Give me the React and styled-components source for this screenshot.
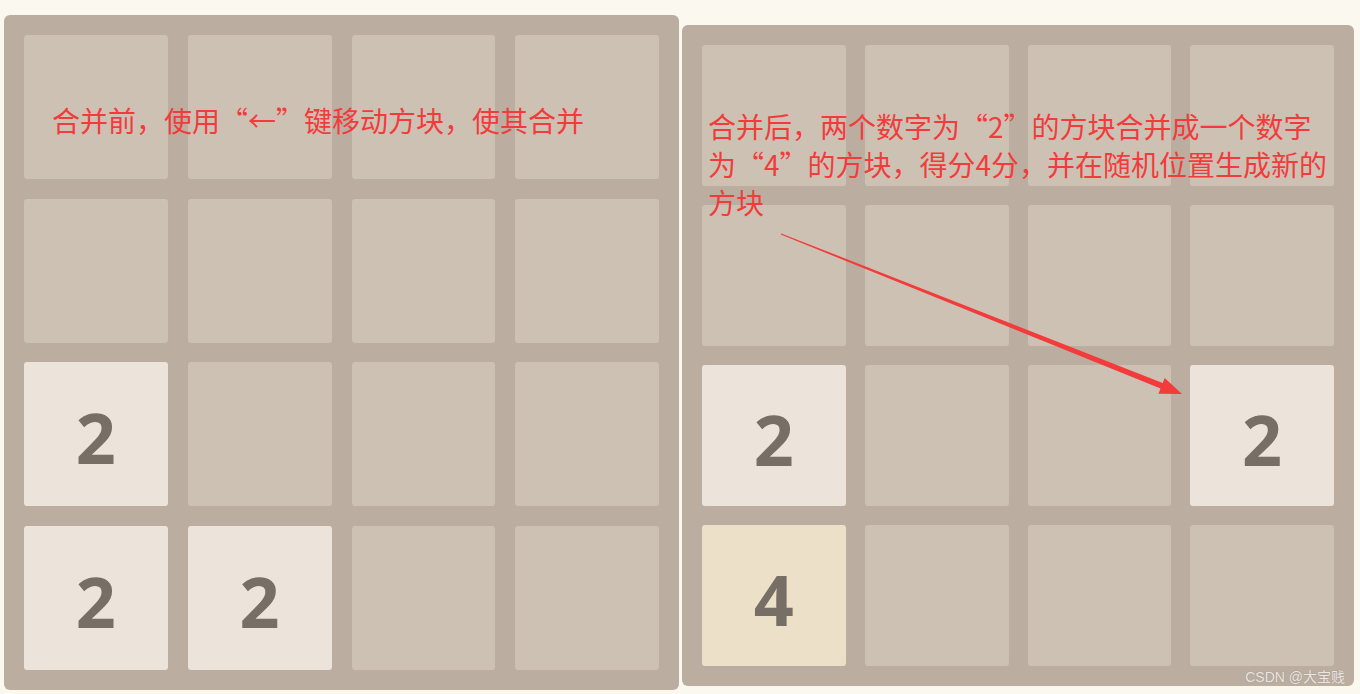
import React from "react";
import styled, { createGlobalStyle } from "styled-components";

const Global = createGlobalStyle`
  html, body { margin: 0; padding: 0; background: #faf8ef; }
  body { width: 1360px; height: 694px; overflow: hidden; font-family: "Open Sans", "Liberation Sans", sans-serif; }
`;

const Page = styled.div`
  display: flex;
  align-items: flex-start;
  gap: 3px;
  padding-left: 4px;
  width: 1360px;
  height: 694px;
  box-sizing: border-box;
`;

const Board = styled.div`
  position: relative;
  box-sizing: border-box;
  margin-top: ${(p) => p.$top}px;
  width: ${(p) => p.$w}px;
  height: ${(p) => p.$h}px;
  padding: 20px;
  background: #bbada0;
  border-radius: 6px;
  display: grid;
  grid-template-columns: repeat(4, 1fr);
  grid-template-rows: repeat(4, 1fr);
  column-gap: ${(p) => p.$cgap}px;
  row-gap: ${(p) => p.$rgap}px;
`;

const tileBg = {
  0: "#cdc1b4",
  2: "#ece4da",
  4: "#ece0c8",
};

const Tile = styled.div`
  border-radius: 3px;
  background: ${(p) => tileBg[p.$value]};
  color: #776e65;
  display: flex;
  align-items: center;
  justify-content: center;
  font-family: "Open Sans", "Liberation Sans", sans-serif;
  font-weight: 700;
  font-size: 70px;
  line-height: 1;
  padding-top: 6px;
  box-sizing: border-box;
`;

const Note = styled.div`
  position: absolute;
  left: ${(p) => p.$x}px;
  top: ${(p) => p.$y}px;
  width: ${(p) => p.$w}px;
  color: #f23c3c;
  font-family: "Noto Sans CJK SC", "Noto Sans", sans-serif;
  font-size: 28px;
  line-height: 38px;
  white-space: ${(p) => (p.$nowrap ? "nowrap" : "normal")};
`;

const ArrowLayer = styled.svg`
  position: absolute;
  left: 0;
  top: 0;
  width: 100%;
  height: 100%;
  pointer-events: none;
  overflow: visible;
`;

const Watermark = styled.div`
  position: absolute;
  right: 9px;
  bottom: 1px;
  font-family: "Liberation Sans", "Noto Sans CJK SC", sans-serif;
  font-size: 14px;
  line-height: 16px;
  color: rgba(245, 242, 238, 0.9);
  text-shadow: 0 0 1px rgba(120, 110, 100, 0.6);
`;

const leftTiles = [
  0, 0, 0, 0,
  0, 0, 0, 0,
  2, 0, 0, 0,
  2, 2, 0, 0,
];

const rightTiles = [
  0, 0, 0, 0,
  0, 0, 0, 0,
  2, 0, 0, 2,
  4, 0, 0, 0,
];

function arrowPoints(x1, y1, x2, y2) {
  const dx = x2 - x1;
  const dy = y2 - y1;
  const len = Math.hypot(dx, dy);
  const ux = dx / len;
  const uy = dy / len;
  const nx = -uy;
  const ny = ux;
  const headLen = 22;
  const headW = 8.5;
  const w0 = 0.6;
  const w1 = 3;
  const bx = x2 - ux * headLen;
  const by = y2 - uy * headLen;
  const pts = [
    [x1 + nx * w0, y1 + ny * w0],
    [bx + nx * w1, by + ny * w1],
    [bx + nx * headW, by + ny * headW],
    [x2, y2],
    [bx - nx * headW, by - ny * headW],
    [bx - nx * w1, by - ny * w1],
    [x1 - nx * w0, y1 - ny * w0],
  ];
  return pts.map((p) => p.map((v) => v.toFixed(1)).join(",")).join(" ");
}

export default function App() {
  return (
    <>
      <Global />
      <Page>
        <Board $top={15} $w={675} $h={675} $cgap={20} $rgap={19.5}>
          {leftTiles.map((v, i) => (
            <Tile key={i} $value={v}>{v ? v : ""}</Tile>
          ))}
          <Note $x={48} $y={86} $nowrap>合并前，使用“←”键移动方块，使其合并</Note>
        </Board>
        <Board $top={25} $w={672} $h={661} $cgap={19} $rgap={19}>
          {rightTiles.map((v, i) => (
            <Tile key={i} $value={v}>{v ? v : ""}</Tile>
          ))}
          <Note $x={26} $y={82} $w={626}>
            合并后，两个数字为“2”的方块合并成一个数字为“4”的方块，得分4分，并在随机位置生成新的方块
          </Note>
          <ArrowLayer viewBox="0 0 672 661">
            <polygon points={arrowPoints(99, 209, 500, 369)} fill="#f23c3c" />
          </ArrowLayer>
          <Watermark>CSDN @大宝贱</Watermark>
        </Board>
      </Page>
    </>
  );
}
